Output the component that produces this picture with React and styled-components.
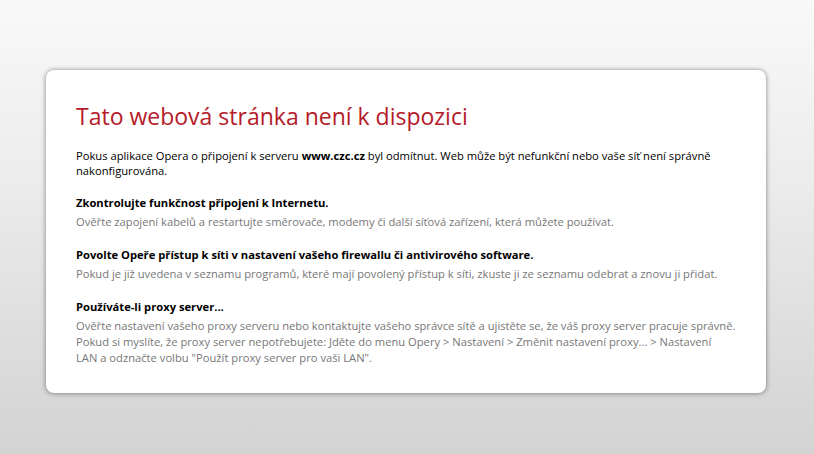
import React from "react"
import styled, { createGlobalStyle } from "styled-components"

const GlobalStyle = createGlobalStyle`
  html, body {
    margin: 0;
    padding: 0;
    height: 100%;
  }
  body {
    background: linear-gradient(to bottom, #f9f9f9 0%, #ececec 40%, #d3d3d3 100%);
    font-family: "Open Sans", "Noto Sans", sans-serif;
  }
`

const Page = styled.div`
  padding: 70px 48px 0 46px;
  height: 454px;
  box-sizing: border-box;
`

const Card = styled.div`
  width: 720px;
  box-sizing: border-box;
  background: #fff;
  border-radius: 8px;
  box-shadow: 0 0 4px rgba(0, 0, 0, 0.35), 0 1px 6px rgba(0, 0, 0, 0.15);
  padding: 30px 24px 27px 30px;
`

const Title = styled.h1`
  margin: 0 0 16px;
  font-weight: 400;
  font-size: 23px;
  line-height: 32px;
  color: #b51b28;
`

const Text = styled.p`
  margin: 0;
  font-size: 11.2px;
  line-height: ${p => p.lh || 15.5}px;
  color: ${p => p.color || "#000"};
`

const Section = styled.div`
  margin-top: 17px;
`

const Heading = styled.h2`
  margin: 0 0 3px;
  font-size: 11.2px;
  line-height: 16px;
  font-weight: 700;
  color: #000;
`

const sections = [
  {
    title: "Zkontrolujte funkčnost připojení k Internetu.",
    text: "Ověřte zapojení kabelů a restartujte směrovače, modemy či další síťová zařízení, která můžete používat.",
  },
  {
    title: "Povolte Opeře přístup k síti v nastavení vašeho firewallu či antivirového software.",
    text: "Pokud je již uvedena v seznamu programů, které mají povolený přístup k síti, zkuste ji ze seznamu odebrat a znovu ji přidat.",
  },
  {
    title: "Používáte-li proxy server...",
    text: "Ověřte nastavení vašeho proxy serveru nebo kontaktujte vašeho správce sítě a ujistěte se, že váš proxy server pracuje správně. Pokud si myslíte, že proxy server nepotřebujete: Jděte do menu Opery > Nastavení > Změnit nastavení proxy... > Nastavení LAN\u00a0a odznačte volbu \"Použít proxy server pro vaši LAN\".",
  },
]

export default function App() {
  return (
    <>
      <GlobalStyle />
      <Page>
        <Card>
          <Title>Tato webová stránka není k dispozici</Title>
          <Text lh={15}>
            Pokus aplikace Opera o připojení k serveru <b>www.czc.cz</b> byl odmítnut. Web může být nefunkční nebo vaše síť není správně nakonfigurována.
          </Text>
          {sections.map(s => (
            <Section key={s.title}>
              <Heading>{s.title}</Heading>
              <Text color="#777" lh={16}>{s.text}</Text>
            </Section>
          ))}
        </Card>
      </Page>
    </>
  )
}
